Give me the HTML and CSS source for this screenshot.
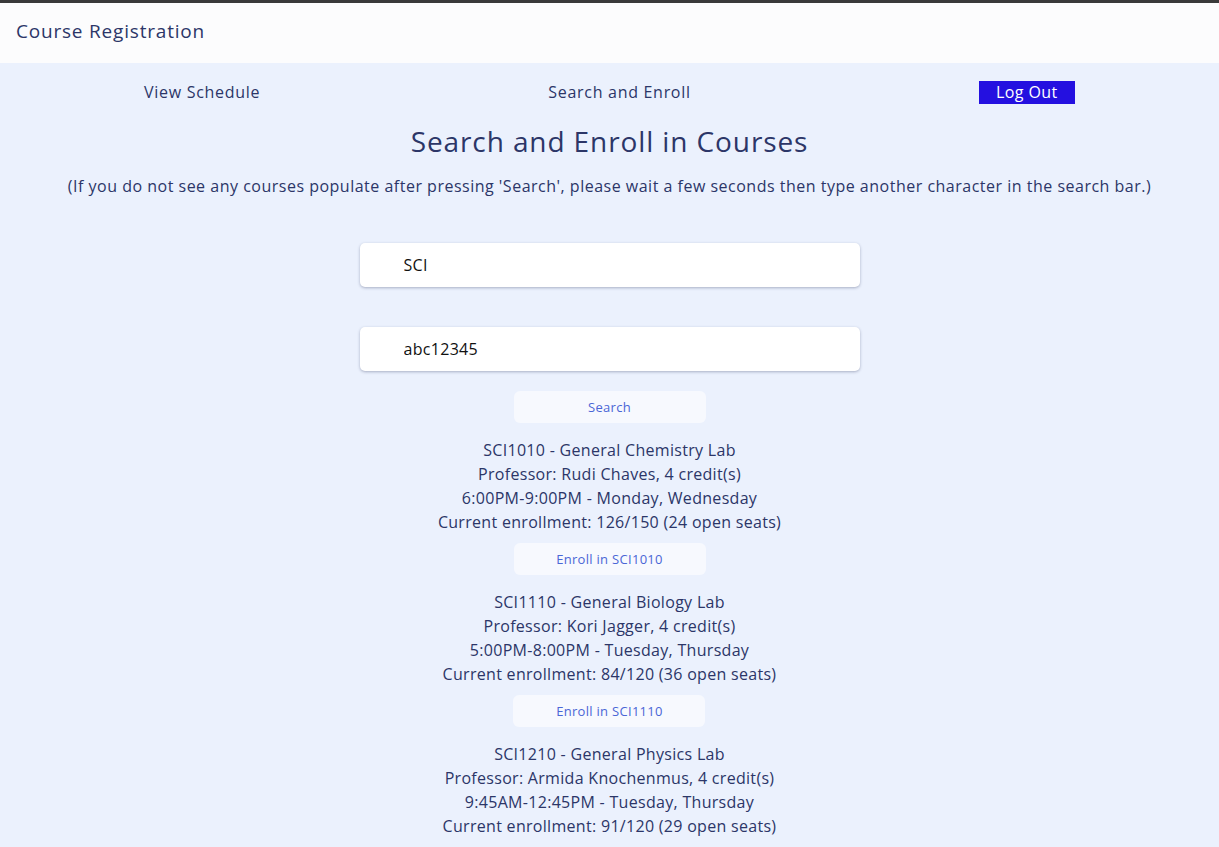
FILE: index.html
```html
<!DOCTYPE html>
<html>
<head>
<meta charset="utf-8">
<link rel="stylesheet" href="styles.css">
</head>
<body>
<header class="topbar">
  <div class="brand">Course Registration</div>
</header>
<main class="page">
  <nav class="nav">
    <a class="nav-link">View Schedule</a>
    <a class="nav-link">Search and Enroll</a>
    <button class="logout">Log Out</button>
  </nav>
  <h1 class="title">Search and Enroll in Courses</h1>
  <p class="note">(If you do not see any courses populate after pressing 'Search', please wait a few seconds then type another character in the search bar.)</p>
  <form class="search">
    <input class="field" type="text" value="SCI">
    <input class="field" type="text" value="abc12345">
    <button type="button" class="btn">Search</button>
  </form>
  <section class="results">
    <div class="course">
      <div class="line">SCI1010 - General Chemistry Lab</div>
      <div class="line">Professor: Rudi Chaves, 4 credit(s)</div>
      <div class="line">6:00PM-9:00PM - Monday, Wednesday</div>
      <div class="line">Current enrollment: 126/150 (24 open seats)</div>
      <button type="button" class="btn">Enroll in SCI1010</button>
    </div>
    <div class="course">
      <div class="line">SCI1110 - General Biology Lab</div>
      <div class="line">Professor: Kori Jagger, 4 credit(s)</div>
      <div class="line">5:00PM-8:00PM - Tuesday, Thursday</div>
      <div class="line">Current enrollment: 84/120 (36 open seats)</div>
      <button type="button" class="btn">Enroll in SCI1110</button>
    </div>
    <div class="course">
      <div class="line">SCI1210 - General Physics Lab</div>
      <div class="line">Professor: Armida Knochenmus, 4 credit(s)</div>
      <div class="line">9:45AM-12:45PM - Tuesday, Thursday</div>
      <div class="line">Current enrollment: 91/120 (29 open seats)</div>
    </div>
  </section>
</main>
</body>
</html>
```
FILE: styles.css
```css
* { box-sizing: border-box; }
html, body { margin: 0; padding: 0; }
body {
  font-family: "Open Sans", "DejaVu Sans", sans-serif;
  color: #2c3668;
  background: #ebf1fd;
  overflow: hidden;
}
.topbar {
  height: 63px;
  background: #fcfcfd;
  border-top: 3px solid #3a3a3a;
  display: flex;
  align-items: center;
  padding-left: 16px;
}
.brand {
  font-size: 19px;
  letter-spacing: 0.8px;
  color: #2c3668;
  margin-top: -4px;
}
.page {
  display: flex;
  flex-direction: column;
  align-items: center;
}
.nav {
  width: 100%;
  display: flex;
  justify-content: space-around;
  align-items: center;
  padding-top: 17px;
  height: 41px;
}
.nav-link {
  font-size: 16px;
  letter-spacing: 0.7px;
  color: #2c3668;
}
.logout {
  font-family: inherit;
  font-size: 16px;
  letter-spacing: 0.4px;
  color: #fff;
  background: #2410e0;
  border: none;
  width: 96px;
  height: 23px;
  padding: 0;
}
.title {
  margin: 20px 0 0;
  font-weight: 400;
  font-size: 28px;
  letter-spacing: 0.9px;
  line-height: 34px;
  color: #2c3668;
}
.note {
  margin: 18px 0 0;
  font-size: 16px;
  letter-spacing: 0.5px;
  line-height: 20px;
}
.search {
  margin-top: 47px;
  display: flex;
  flex-direction: column;
  align-items: center;
}
.field {
  width: 500px;
  height: 44px;
  border: none;
  border-radius: 5px;
  background: #fff;
  box-shadow: 0 1px 3px rgba(40, 50, 90, 0.35);
  padding-left: 44px;
  font-family: inherit;
  font-size: 16px;
  letter-spacing: 0.3px;
  color: #111;
  margin-bottom: 40px;
  outline: none;
}
.field + .field { margin-bottom: 20px; }
.btn {
  width: 192px;
  height: 32px;
  border: none;
  border-radius: 6px;
  background: #f7f9fe;
  color: #4a66d6;
  font-family: inherit;
  font-size: 13px;
  letter-spacing: 0.3px;
  padding: 0;
}
.results {
  display: flex;
  flex-direction: column;
  align-items: center;
  margin-top: 15px;
}
.course {
  display: flex;
  flex-direction: column;
  align-items: center;
  margin-bottom: 15px;
}
.line {
  font-size: 16px;
  letter-spacing: 0.3px;
  line-height: 24px;
  text-align: center;
}
.course .btn { margin-top: 9px; }
```
